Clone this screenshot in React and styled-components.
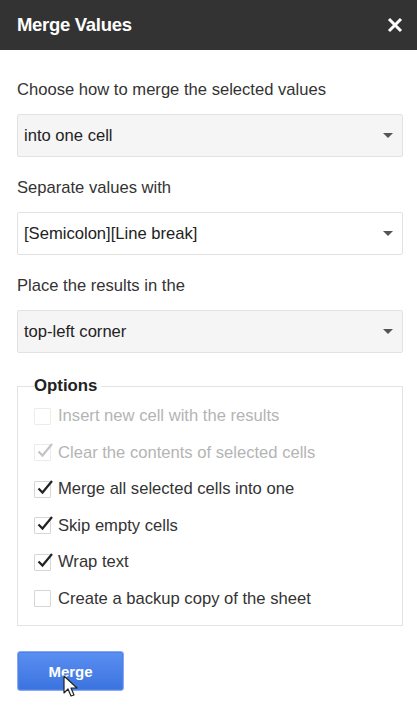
import React from "react";
import styled, { createGlobalStyle } from "styled-components";

const Global = createGlobalStyle`
  html, body {
    margin: 0;
    padding: 0;
    background: #fff;
  }
  body {
    font-family: "Liberation Sans", Arial, sans-serif;
  }
`;

const Dialog = styled.div`
  width: 417px;
  height: 713px;
  background: #fff;
  overflow: hidden;
  position: relative;
`;

const Header = styled.div`
  height: 50px;
  background: #333333;
  display: flex;
  align-items: center;
  justify-content: space-between;
  padding: 0 14px 0 17px;
  box-sizing: border-box;
`;

const Title = styled.h1`
  margin: 0;
  color: #fff;
  font-size: 18.5px;
  font-weight: 700;
  letter-spacing: -0.3px;
`;

const Close = styled.button`
  border: 0;
  background: none;
  padding: 0;
  width: 16px;
  height: 16px;
  display: flex;
  cursor: pointer;
`;

const Body = styled.div`
  padding: 29px 14px 0 17px;
`;

const Label = styled.div`
  color: #333;
  font-size: 16.6px;
  line-height: 22px;
  margin-bottom: 13px;
`;

const Select = styled.div`
  height: 43px;
  box-sizing: border-box;
  border: 1px solid #e2e2e2;
  border-radius: 2px;
  background: ${(p) => (p.$active ? "#fff" : "#f5f5f5")};
  display: flex;
  align-items: center;
  justify-content: space-between;
  padding: 0 9px 0 6px;
  font-size: 16.6px;
  color: #222;
  margin-bottom: 20px;
`;

const Caret = styled.span`
  width: 0;
  height: 0;
  border-left: 5px solid transparent;
  border-right: 5px solid transparent;
  border-top: 5px solid #555;
`;

const Fieldset = styled.fieldset`
  margin: 0;
  margin-top: 23px;
  border: 1px solid #e3e3e3;
  padding: 2px 0 8px 16px;
`;

const Legend = styled.legend`
  font-weight: 700;
  font-size: 16.8px;
  color: #222;
  padding: 0 4px 0 0;
  margin-left: 0;
`;

const Option = styled.label`
  display: flex;
  align-items: center;
  gap: 7px;
  height: 36.5px;
  font-size: 16.6px;
  color: ${(p) => (p.$disabled ? "#b4b4b4" : "#333")};
`;

const Box = styled.span`
  width: 17px;
  height: 17px;
  box-sizing: border-box;
  border: 1px solid ${(p) => (p.$disabled ? "#ececec" : "#d6d6d6")};
  border-radius: 1px;
  background: #fff;
  position: relative;
  flex: none;

  svg {
    position: absolute;
    left: 1px;
    top: -4px;
  }
`;

const Actions = styled.div`
  padding: 25px 0 0 0;
`;

const MergeButton = styled.button`
  width: 107px;
  height: 40px;
  border: 1px solid #86a9f2;
  border-radius: 3px;
  background: linear-gradient(#5a8ff2, #3b73df);
  box-shadow: inset 0 0 0 1px #4d80e8;
  color: #fff;
  font-family: inherit;
  font-size: 15px;
  font-weight: 700;
  position: relative;
`;

const Cursor = styled.svg`
  position: absolute;
  left: 45px;
  top: 23px;
`;

const Check = ({ disabled }) => (
  <svg width="18" height="18" viewBox="0 0 18 18">
    <path
      d="M2.5 10.5 L6.5 14.5 L16 3"
      fill="none"
      stroke={disabled ? "#c4c4c4" : "#222"}
      strokeWidth="2.2"
    />
  </svg>
);

const options = [
  { text: "Insert new cell with the results", checked: false, disabled: true },
  { text: "Clear the contents of selected cells", checked: true, disabled: true },
  { text: "Merge all selected cells into one", checked: true },
  { text: "Skip empty cells", checked: true },
  { text: "Wrap text", checked: true },
  { text: "Create a backup copy of the sheet", checked: false },
];

export default function App() {
  return (
    <Dialog>
      <Global />
      <Header>
        <Title>Merge Values</Title>
        <Close aria-label="Close">
          <svg width="16" height="16" viewBox="0 0 16 16">
            <path d="M2 2 L14 14 M14 2 L2 14" stroke="#fff" strokeWidth="3" />
          </svg>
        </Close>
      </Header>
      <Body>
        <Label>Choose how to merge the selected values</Label>
        <Select>
          into one cell
          <Caret />
        </Select>
        <Label>Separate values with</Label>
        <Select $active>
          [Semicolon][Line break]
          <Caret />
        </Select>
        <Label>Place the results in the</Label>
        <Select>
          top-left corner
          <Caret />
        </Select>
        <Fieldset>
          <Legend>Options</Legend>
          {options.map((o) => (
            <Option key={o.text} $disabled={o.disabled}>
              <Box $disabled={o.disabled}>{o.checked && <Check disabled={o.disabled} />}</Box>
              {o.text}
            </Option>
          ))}
        </Fieldset>
        <Actions>
          <MergeButton>
            Merge
            <Cursor width="16" height="24" viewBox="0 0 16 24">
              <path
                d="M1 1 L1 18 L5 14 L8 21 L11 20 L8 13 L14 13 Z"
                fill="#fff"
                stroke="#222"
                strokeWidth="1.2"
                strokeLinejoin="round"
              />
            </Cursor>
          </MergeButton>
        </Actions>
      </Body>
    </Dialog>
  );
}
